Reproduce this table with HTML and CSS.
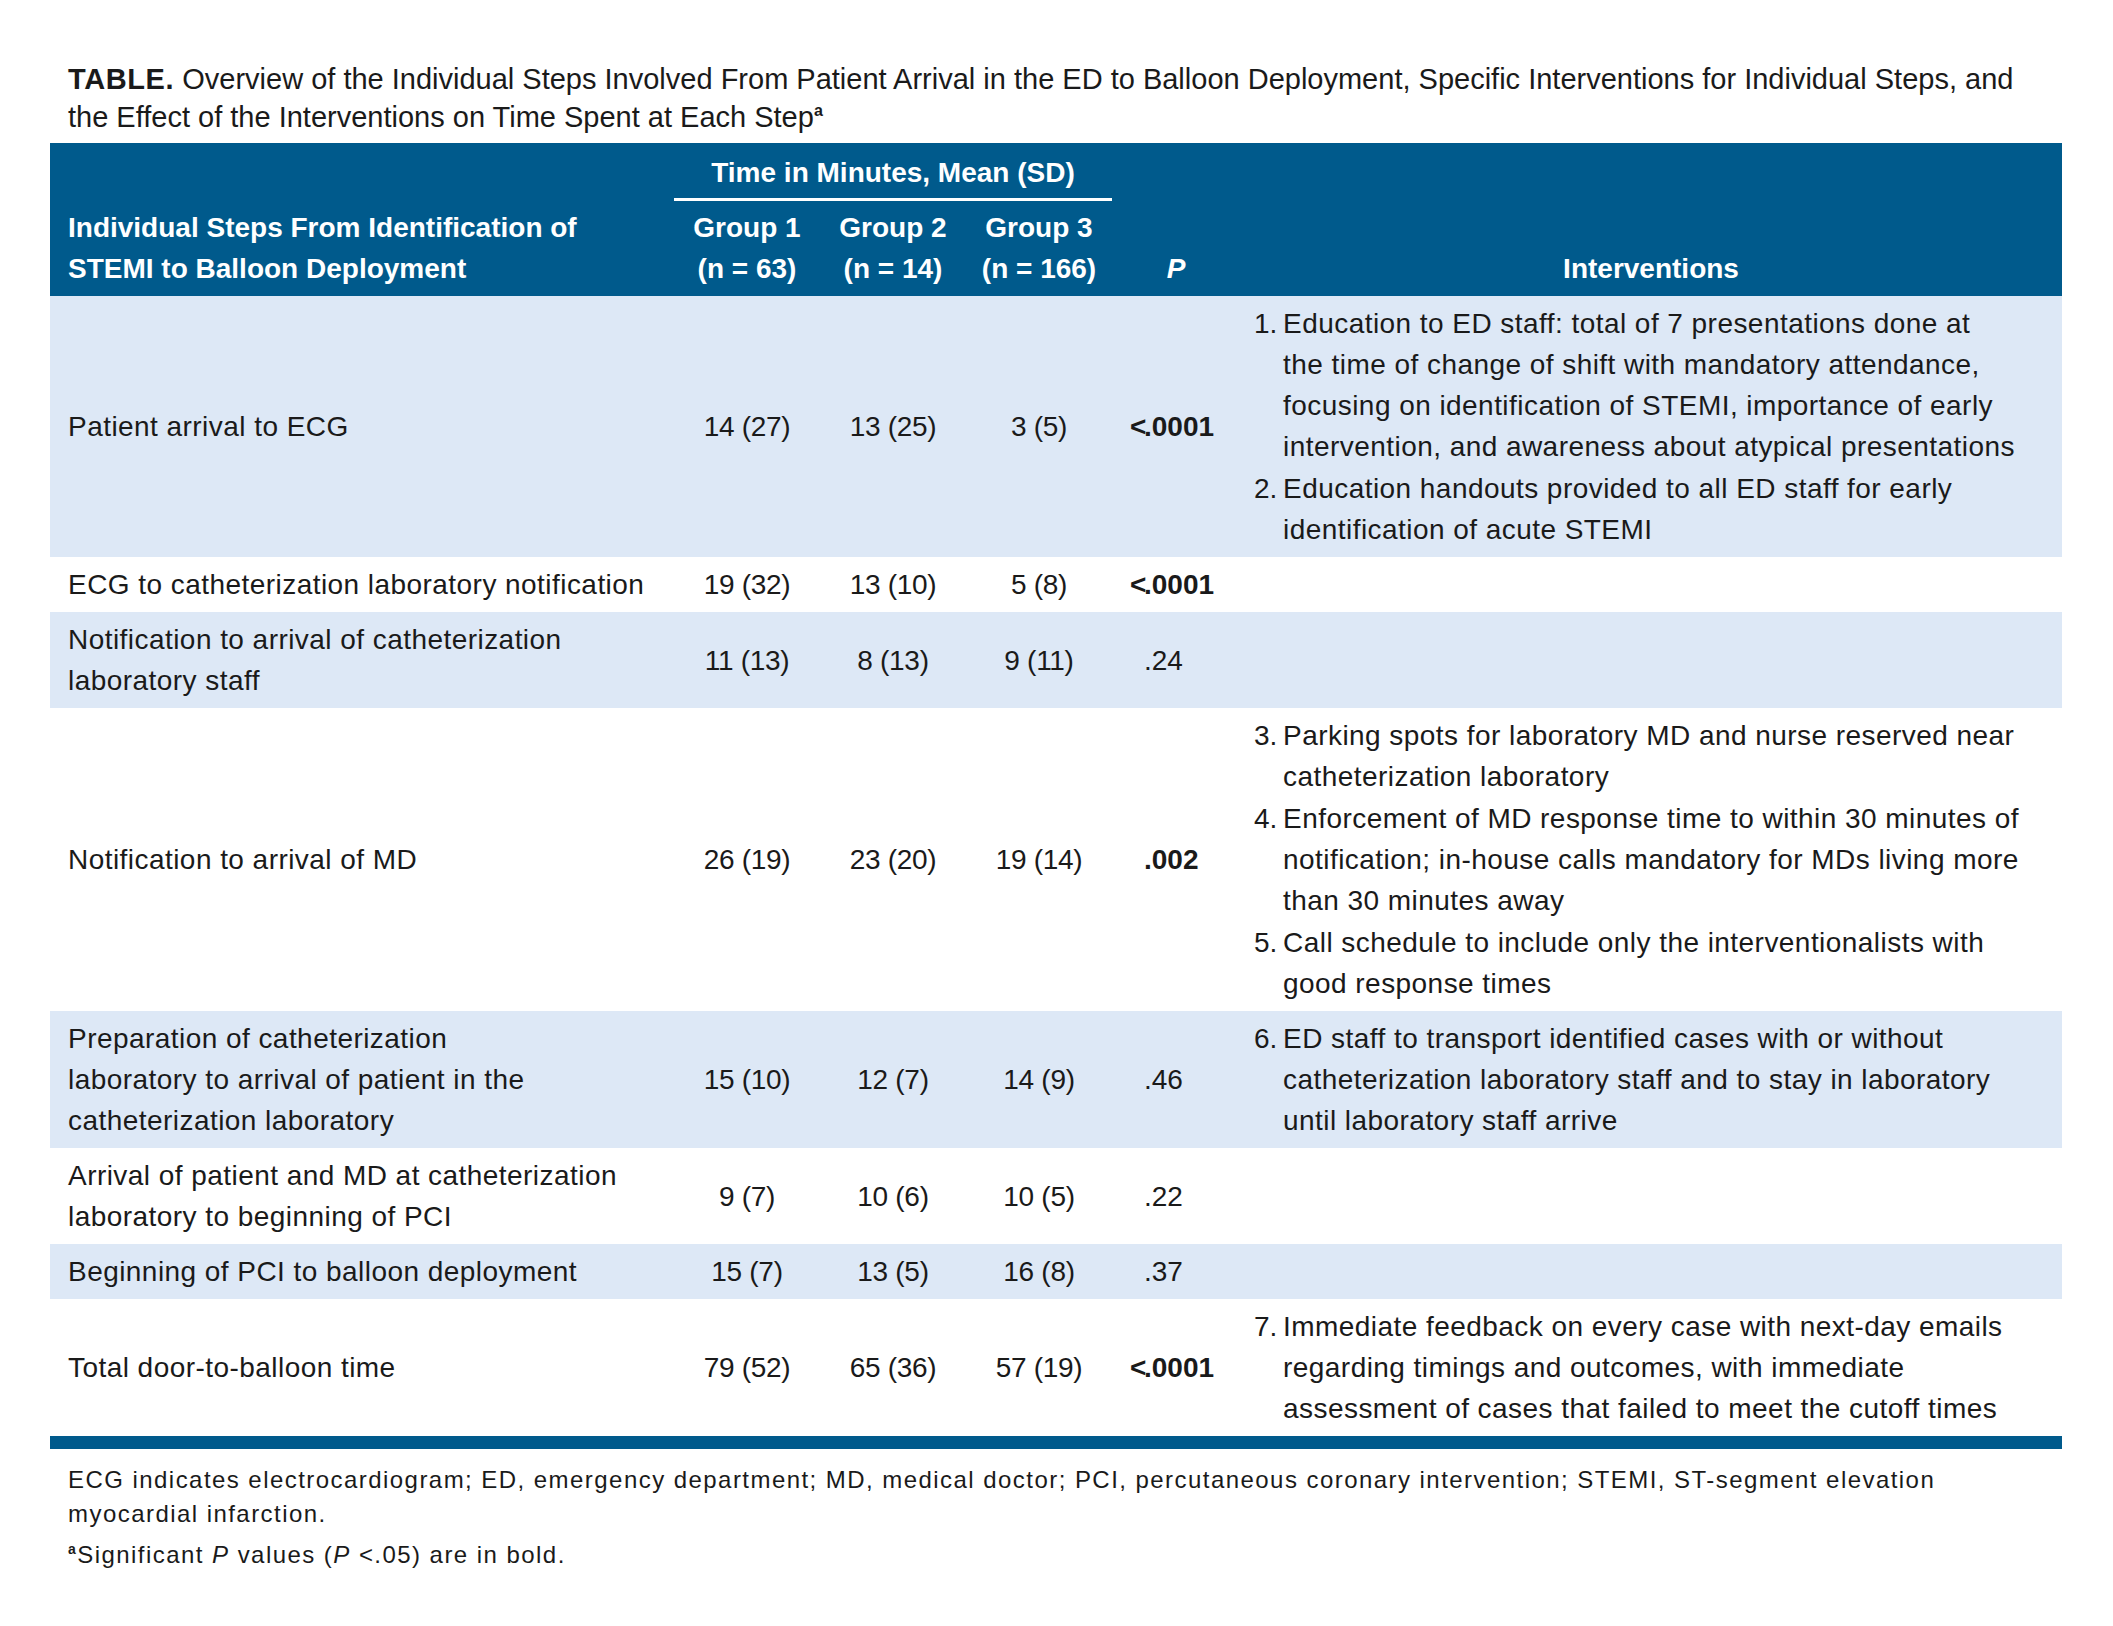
FILE: index.html
```html
<!DOCTYPE html>
<html lang="en">
<head>
<meta charset="utf-8">
<title>Table</title>
<link rel="stylesheet" href="styles.css">
</head>
<body>
<div class="page">
  <p class="caption"><b class="label">TABLE.</b> Overview of the Individual Steps Involved From Patient Arrival in the ED to Balloon Deployment, Specific Interventions for Individual Steps, and<br>the Effect of the Interventions on Time Spent at Each Step<sup class="sup">a</sup></p>

  <table class="data">
    <colgroup>
      <col class="c-step">
      <col class="c-grp">
      <col class="c-grp">
      <col class="c-grp">
      <col class="c-p">
      <col class="c-int">
    </colgroup>
    <thead>
      <tr>
        <th rowspan="2" class="h-step">Individual Steps From Identification of<br>STEMI to Balloon Deployment</th>
        <th colspan="3" class="h-span">Time in Minutes, Mean (SD)</th>
        <th rowspan="2" class="h-p"><i>P</i></th>
        <th rowspan="2" class="h-int">Interventions</th>
      </tr>
      <tr>
        <th class="h-grp">Group 1<br>(n = 63)</th>
        <th class="h-grp">Group 2<br>(n = 14)</th>
        <th class="h-grp">Group 3<br>(n = 166)</th>
      </tr>
    </thead>
    <tbody>
      <tr class="shade">
        <td class="step">Patient arrival to ECG</td>
        <td class="num">14 (27)</td>
        <td class="num">13 (25)</td>
        <td class="num">3 (5)</td>
        <td class="pv sig"><span class="lt">&lt;</span>.0001</td>
        <td class="int">
          <ol class="list">
            <li><span class="n">1.</span><span class="t">Education to ED staff: total of 7 presentations done at<br>the time of change of shift with mandatory attendance,<br>focusing on identification of STEMI, importance of early<br>intervention, and awareness about atypical presentations</span></li>
            <li><span class="n">2.</span><span class="t">Education handouts provided to all ED staff for early<br>identification of acute STEMI</span></li>
          </ol>
        </td>
      </tr>
      <tr>
        <td class="step">ECG to catheterization laboratory notification</td>
        <td class="num">19 (32)</td>
        <td class="num">13 (10)</td>
        <td class="num">5 (8)</td>
        <td class="pv sig"><span class="lt">&lt;</span>.0001</td>
        <td class="int"></td>
      </tr>
      <tr class="shade">
        <td class="step">Notification to arrival of catheterization<br>laboratory staff</td>
        <td class="num">11 (13)</td>
        <td class="num">8 (13)</td>
        <td class="num">9 (11)</td>
        <td class="pv">.24</td>
        <td class="int"></td>
      </tr>
      <tr>
        <td class="step">Notification to arrival of MD</td>
        <td class="num">26 (19)</td>
        <td class="num">23 (20)</td>
        <td class="num">19 (14)</td>
        <td class="pv sig">.002</td>
        <td class="int">
          <ol class="list">
            <li><span class="n">3.</span><span class="t">Parking spots for laboratory MD and nurse reserved near<br>catheterization laboratory</span></li>
            <li><span class="n">4.</span><span class="t">Enforcement of MD response time to within 30 minutes of<br>notification; in-house calls mandatory for MDs living more<br>than 30 minutes away</span></li>
            <li><span class="n">5.</span><span class="t">Call schedule to include only the interventionalists with<br>good response times</span></li>
          </ol>
        </td>
      </tr>
      <tr class="shade">
        <td class="step">Preparation of catheterization<br>laboratory to arrival of patient in the<br>catheterization laboratory</td>
        <td class="num">15 (10)</td>
        <td class="num">12 (7)</td>
        <td class="num">14 (9)</td>
        <td class="pv">.46</td>
        <td class="int">
          <ol class="list">
            <li><span class="n">6.</span><span class="t">ED staff to transport identified cases with or without<br>catheterization laboratory staff and to stay in laboratory<br>until laboratory staff arrive</span></li>
          </ol>
        </td>
      </tr>
      <tr>
        <td class="step">Arrival of patient and MD at catheterization<br>laboratory to beginning of PCI</td>
        <td class="num">9 (7)</td>
        <td class="num">10 (6)</td>
        <td class="num">10 (5)</td>
        <td class="pv">.22</td>
        <td class="int"></td>
      </tr>
      <tr class="shade">
        <td class="step">Beginning of PCI to balloon deployment</td>
        <td class="num">15 (7)</td>
        <td class="num">13 (5)</td>
        <td class="num">16 (8)</td>
        <td class="pv">.37</td>
        <td class="int"></td>
      </tr>
      <tr class="last">
        <td class="step">Total door-to-balloon time</td>
        <td class="num">79 (52)</td>
        <td class="num">65 (36)</td>
        <td class="num">57 (19)</td>
        <td class="pv sig"><span class="lt">&lt;</span>.0001</td>
        <td class="int">
          <ol class="list">
            <li><span class="n">7.</span><span class="t">Immediate feedback on every case with next-day emails<br>regarding timings and outcomes, with immediate<br>assessment of cases that failed to meet the cutoff times</span></li>
          </ol>
        </td>
      </tr>
    </tbody>
  </table>

  <div class="notes">
    <p class="note">ECG indicates electrocardiogram; ED, emergency department; MD, medical doctor; PCI, percutaneous coronary intervention; STEMI, ST-segment elevation<br>myocardial infarction.</p>
    <p class="note"><sup class="fn">a</sup>Significant <i>P</i> values (<i>P</i> &lt;.05) are in bold.</p>
  </div>
</div>
</body>
</html>
```

FILE: styles.css
```css
html, body {
  margin: 0;
  padding: 0;
  background: #ffffff;
}

body {
  font-family: "Liberation Sans", Arial, sans-serif;
  color: #1a1a1a;
}

.page {
  padding: 60px 0 0 50px;
  width: 2012px;
}

.caption {
  margin: 0 0 7px 18px;
  font-size: 29px;
  line-height: 38px;
  color: #1a1a1a;
  white-space: nowrap;
}

.caption .label {
  font-weight: 700;
  letter-spacing: 0.6px;
}

.sup {
  font-size: 16px;
  font-weight: 700;
  vertical-align: 11px;
  line-height: 0;
}

.data {
  width: 2012px;
  table-layout: fixed;
  border-collapse: separate;
  border-spacing: 0;
  font-size: 28px;
  line-height: 41px;
  border-bottom: 13px solid #005a8c;
}

.c-step { width: 624px; }
.c-grp { width: 146px; }
.c-p { width: 128px; }
.c-int { width: 822px; }

thead th {
  background: #005a8c;
  color: #ffffff;
  font-weight: 700;
  padding: 6px 0 7px;
  vertical-align: bottom;
  text-align: center;
  white-space: nowrap;
}

thead th.h-step {
  text-align: left;
  padding-left: 18px;
}

thead th.h-span {
  padding: 9px 0 5px;
  border-bottom: 3px solid #ffffff;
}

thead th.h-p i {
  font-style: italic;
}

tbody td {
  padding: 7px 0;
  vertical-align: middle;
  white-space: nowrap;
}

tbody tr.shade td {
  background: #dde8f6;
}

td.step {
  padding-left: 18px;
  letter-spacing: 0.45px;
}

td.num {
  text-align: center;
  letter-spacing: -0.3px;
}

td.pv {
  text-align: left;
  padding-left: 32px;
}

td.pv.sig {
  font-weight: 700;
}

.lt {
  display: inline-block;
  width: 14px;
  margin-left: -14px;
}

td.int {
  padding-left: 14px;
  letter-spacing: 0.45px;
}

.list {
  list-style: none;
  margin: 0;
  padding: 0;
}

.list li {
  display: flex;
}

.list li + li {
  margin-top: 1px;
}

.list .n {
  flex: 0 0 29px;
  letter-spacing: 0;
}

.notes {
  padding: 14px 0 0 18px;
}

.note {
  margin: 0 0 7px;
  font-size: 24px;
  line-height: 34px;
  letter-spacing: 1.45px;
  white-space: nowrap;
}

.fn {
  font-size: 14px;
  font-weight: 700;
  vertical-align: 9px;
  line-height: 0;
}
```
